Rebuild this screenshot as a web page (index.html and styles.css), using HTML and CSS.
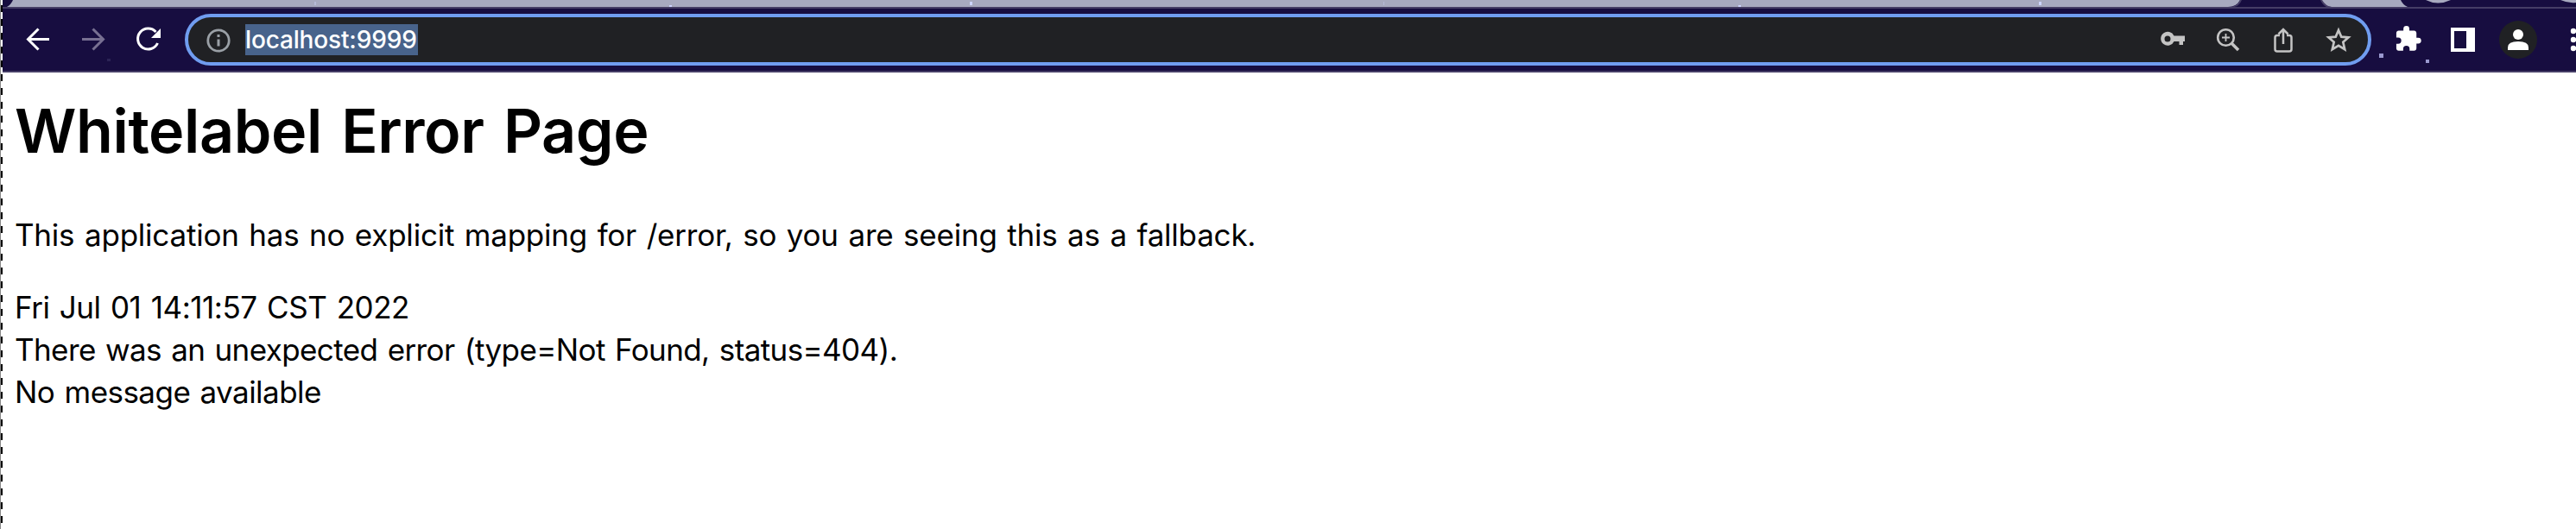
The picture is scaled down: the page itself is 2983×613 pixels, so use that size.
FILE: index.html
```
<!DOCTYPE html>
<html lang="en">
<head>
<meta charset="utf-8">
<title>localhost:9999</title>
<link rel="stylesheet" href="styles.css">
</head>
<body>
<div class="window">
  <div class="edge"></div>
  <div class="browser">
    <header class="chrome">
      <svg class="tabs" viewBox="3 0 2980 10" width="2980" height="10">
        <path fill="#a7a9bf" d="M8 8Q13 5 15 0H2594Q2590 8 2580 8Z"/>
        <path fill="#a7a9bf" d="M2688 0Q2692 8 2700 8H2788Q2782 5 2780 0Z"/>
        <path fill="#a7a9bf" d="M2809 0Q2823 7 2838 0ZM2965 0Q2974 4 2983 3V0Z"/>
        <path fill="#453d66" d="M3 8H2583Q2591 7 2594 0L2596 0Q2593 7 2587 8H2694Q2689 5 2687 0H2689Q2693 7 2700 8H2983V10H3Z"/>
        <g fill="#cdd4ff"><path opacity=".4" d="M364 2h2v4h-2zM1602 2h1v4h-1z"/><path d="M775 6h3v2h-3zM1123 2h3v4h-3zM2013 6h3v2h-3zM2361 2h3v4h-3z"/></g>
      </svg>
      <div class="toolbar">
        <svg class="nav" viewBox="3 10 211 72" width="211" height="72" fill="none" stroke="#fff" stroke-width="3">
          <path d="M57 45.500H33M44.500 33.500L32.500 45.500L44.500 57.500"/>
          <path stroke="#787092" d="M95 45.500H119M107.500 33.500L119.500 45.500L107.500 57.500"/>
          <path d="M182.500 50A12 12 0 1 1 180.500 37"/>
          <path fill="#fff" stroke="none" d="M186 33V44H175Z"/>
          <path fill="#2c2456" stroke="none" d="M124 68h4v3h-4z"/>
        </svg>
        <div class="omnibox">
          <svg class="info" viewBox="0 0 28 28" width="28" height="28"><circle cx="14" cy="14" r="12.200" fill="none" stroke="#9aa0a6" stroke-width="2.800"/><path fill="#9aa0a6" d="M12.500 7h3v3h-3zM12.500 12.500h3v8h-3z"/></svg>
          <span class="url">localhost:9999</span>
          <svg class="actions" viewBox="2500 20 224 52" width="224" height="52" fill="none" stroke="#c4c4c4" stroke-width="2.600">
            <path fill="#c4c4c4" stroke="none" fill-rule="evenodd" d="M2517.500 41.500H2530V48H2528V52H2523.500V48H2517.500A8 8 0 1 1 2517.500 41.500ZM2510 41.500A3.500 3.500 0 1 0 2510 48.500A3.500 3.500 0 1 0 2510 41.500Z"/>
            <circle cx="2577.500" cy="43.500" r="9.300"/><path stroke-width="3.500" d="M2584 50L2592 58"/><path stroke-width="1.800" d="M2573 43.500H2582M2577.500 39V48"/>
            <path stroke-width="2.500" d="M2640 41H2637Q2634.500 41 2634.500 43.500V57Q2634.500 59.500 2637 59.500H2651Q2653.500 59.500 2653.500 57V43.500Q2653.500 41 2651 41H2648M2644 51V34M2638.500 39.500L2644 34L2649.500 39.500"/>
            <path stroke-width="2.700" d="M2708 35L2711.300 42.700L2719.500 43.400L2713.300 48.800L2715.200 57.200L2708 52.800L2700.800 57.200L2702.700 48.800L2696.500 43.400L2704.700 42.700Z"/>
          </svg>
        </div>
        <svg class="extras" viewBox="2746 10 237 72" width="237" height="72" fill="#fff">
          <path fill="#9a99cf" d="M2755 62h5v5h-5zM2809 69h4v4h-4z"/>
          <path transform="translate(2772.200 28.600) scale(1.370)" d="M20.500 11H19V7c0-1.100-.9-2-2-2h-4V3.500a2.500 2.500 0 0 0-5 0V5H4c-1.100 0-2 .9-2 2v3.800h1.500a2.700 2.700 0 0 1 0 5.400H2V20c0 1.100.9 2 2 2h3.800v-1.500a2.700 2.700 0 0 1 5.400 0V22H17c1.100 0 2-.9 2-2v-4h1.500a2.500 2.500 0 0 0 0-5z"/>
          <path fill-rule="evenodd" d="M2838 32H2866V60H2838ZM2842 36V56H2856V36Z"/>
          <circle cx="2916" cy="46" r="22" fill="#202124"/><circle cx="2916" cy="40" r="6"/><path d="M2904 58V55Q2904 48 2916 48Q2928 48 2928 55V58Z"/>
          <circle cx="2980" cy="36" r="3.200"/><circle cx="2980" cy="46" r="3.200"/><circle cx="2980" cy="56" r="3.200"/>
        </svg>
      </div>
    </header>
    <main class="page">
      <h1>Whitelabel Error Page</h1>
      <p class="summary">This application has no explicit mapping for /error, so you are seeing this as a fallback.</p>
      <div class="date">Fri Jul 01 14:11:57 CST 2022</div>
      <div class="error">There was an unexpected error (type=Not Found, status=404).</div>
      <div class="message">No message available</div>
    </main>
  </div>
</div>
</body>
</html>
```
FILE: styles.css
```
body { margin: 0; background: #fff; overflow: hidden; }
.window { display: flex; height: 613px; }
.edge { width: 3px; flex: none; box-sizing: border-box; border-left: 1px solid #888; background: repeating-linear-gradient(to bottom, #fff 0 6px, #000 6px 14px, #fff 14px 16px); }
.browser { flex: 1; min-width: 0; }
.chrome { height: 84px; box-sizing: border-box; background: #170d40; border-bottom: 2px solid #453d66; overflow: hidden; }
svg { display: block; flex: none; }
.toolbar { display: flex; height: 72px; }
.omnibox { display: flex; align-items: center; width: 2532px; height: 60px; margin-top: 6px; box-sizing: border-box; border: 4px solid #709df0; border-radius: 30px; background: #202124; padding-left: 21px; }
.info { margin-top: 1px; }
.url { margin-left: 17px; width: 200px; height: 36px; font: 500 28px/36px Inter, sans-serif; letter-spacing: -0.15px; background: #48638b; color: #fff; white-space: nowrap; }
.actions { margin-left: auto; margin-right: 18px; }
.page { padding-left: 14px; font: 35px/49px Inter, sans-serif; word-spacing: 2px; color: #000; white-space: nowrap; }
h1 { margin: 19px 0 0; font-size: 70px; line-height: 98px; font-weight: 600; letter-spacing: -0.4px; word-spacing: 5px; width: max-content; }
.page p { margin: 47px 0 35px; width: max-content; }
.page div { width: max-content; }
.summary { letter-spacing: -0.22px; }
.date { letter-spacing: -0.46px; }
.error { letter-spacing: -0.6px; }
.message { letter-spacing: -0.55px; }
```
